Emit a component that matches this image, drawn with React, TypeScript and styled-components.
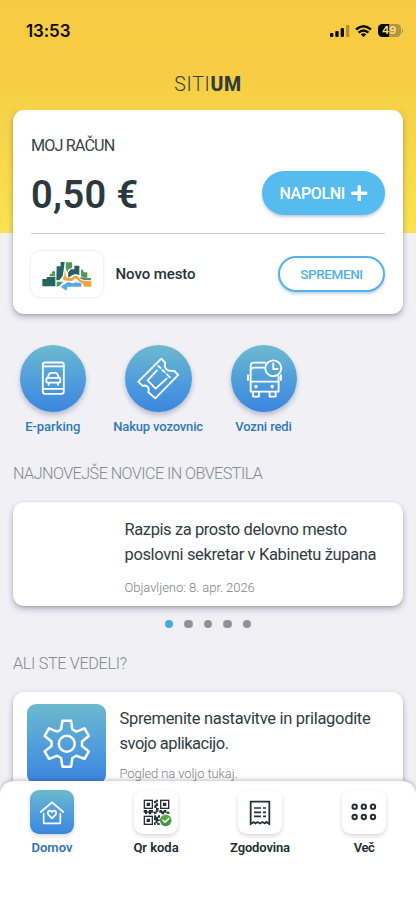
import React from 'react';
import styled, { createGlobalStyle, css } from 'styled-components';

const GlobalStyle = createGlobalStyle`
  * { box-sizing: border-box; }
  body { margin: 0; background: #f0f0f5; font-family: Roboto, "Noto Sans", sans-serif; color: #263338; }
  h1, h2, p { margin: 0; font-weight: inherit; font-size: inherit; }
  button { font-family: inherit; cursor: pointer; }
`;

const blueGradient = css`
  background: linear-gradient(180deg, #6cbacd 0%, #529fdb 50%, #3a86df 100%);
`;

const Screen = styled.div`
  width: 416px;
  height: 900px;
  overflow: hidden;
  display: flex;
  flex-direction: column;
  background: linear-gradient(180deg, #f6cb43 0, #f6cd44 75px, #f8d94a 160px, #fae351 233px) 0 0 / 100% 233px no-repeat #f0f0f5;
`;

const StatusBar = styled.header`
  height: 61px;
  flex: none;
  display: flex;
  align-items: center;
  justify-content: space-between;
  padding: 0 13px 0 26px;
  color: #0b0a04;
`;

const Clock = styled.span`
  font: 600 17px/20px Inter, sans-serif;
  letter-spacing: -0.1px;
`;

const StatusIcons = styled.div`
  display: flex;
  align-items: center;
  gap: 5.5px;
`;

const Battery = styled.span`
  display: flex;
  align-items: center;
  gap: 1px;
  &::after {
    content: '';
    width: 1.5px;
    height: 4px;
    border-radius: 0 2px 2px 0;
    background: #ad9338;
  }
`;

const BatteryLevel = styled.span`
  width: 23px;
  height: 13px;
  border-radius: 4.2px;
  background: linear-gradient(90deg, #080702 49%, #b0963a 49%);
  color: #fbe088;
  font: 600 11px/13.5px Inter, sans-serif;
  text-align: center;
  letter-spacing: -0.2px;
`;

const Brand = styled.h1`
  height: 49px;
  flex: none;
  display: flex;
  justify-content: center;
  padding-top: 12px;
  font-size: 19.5px;
  line-height: 24px;
  font-weight: 300;
  letter-spacing: 0.75px;
  color: #34403b;
  strong { font-weight: 800; letter-spacing: 0.6px; color: #2f3d3b; }
`;

const Content = styled.main`
  flex: none;
  height: 685px;
  overflow: hidden;
  padding: 0 13px;
`;

const Card = styled.section`
  background: #fff;
  border-radius: 11px;
  box-shadow: 0 3px 6px rgba(52, 48, 90, 0.32), 0 1px 2px rgba(52, 48, 90, 0.15);
`;

const AccountCard = styled(Card)`
  height: 203.5px;
  padding: 25.5px 18px 0;
`;

const Label = styled.p`
  font-size: 16.2px;
  line-height: 20px;
  font-weight: 400;
  letter-spacing: -0.88px;
  color: #37434a;
`;

const BalanceRow = styled.div`
  display: flex;
  align-items: center;
  justify-content: space-between;
  margin-top: 15.5px;
  padding-bottom: 18px;
  height: 63px;
  border-bottom: 1px solid #cbced1;
`;

const Amount = styled.span`
  font-size: 38px;
  line-height: 44px;
  padding-top: 4px;
  font-weight: 600;
  letter-spacing: 0.4px;
  color: #2b393f;
`;

const TopUpButton = styled.button`
  width: 123px;
  height: 44px;
  border: 0;
  border-radius: 22px;
  background: #56bbef;
  color: #fff;
  display: flex;
  align-items: center;
  justify-content: center;
  gap: 6px;
  font-size: 16px;
  font-weight: 500;
  letter-spacing: -0.32px;
  box-shadow: 0 2px 3px rgba(60, 110, 150, 0.35);
`;

const CityRow = styled.div`
  display: flex;
  align-items: center;
  margin-top: 17px;
  height: 46px;
`;

const CityBadge = styled.div`
  width: 72px;
  height: 46px;
  border-radius: 9px;
  background: #fff;
  box-shadow: 0 0 3px rgba(0, 0, 0, 0.15);
`;

const CityName = styled.span`
  flex: 1;
  margin-left: 12.5px;
  font-size: 15px;
  font-weight: 550;
  letter-spacing: -0.08px;
`;

const ChangeButton = styled.button`
  width: 107px;
  height: 35.5px;
  border: 2px solid #54b2e6;
  border-radius: 18px;
  background: #fff;
  color: #50b2e5;
  font-size: 13.5px;
  font-weight: 500;
  letter-spacing: -0.4px;
  padding: 0;
  box-shadow: 0 2px 3px rgba(60, 110, 150, 0.3);
`;

const Services = styled.div`
  display: grid;
  grid-template-columns: repeat(3, 105.4px);
  margin: 31.5px 0 0 -12.5px;
`;

const Service = styled.div`
  display: flex;
  flex-direction: column;
  align-items: center;
`;

const ServiceDisc = styled.div`
  width: 66.6px;
  height: 66.6px;
  border-radius: 50%;
  ${blueGradient}
  box-shadow: 0 3px 5px rgba(52, 60, 100, 0.3);
  svg { display: block; }
`;

const ServiceLabel = styled.span<{ $spacing: number }>`
  margin-top: 6.5px;
  margin-left: -1px;
  font-size: 13px;
  line-height: 18px;
  font-weight: 550;
  white-space: nowrap;
  letter-spacing: ${(p) => p.$spacing}px;
  color: #3078b6;
`;

const SectionTitle = styled.h2<{ $top: number; $spacing: number }>`
  margin-top: ${(p) => p.$top}px;
  font-size: 16.2px;
  line-height: 20px;
  font-weight: 300;
  letter-spacing: ${(p) => p.$spacing}px;
  color: #858a8e;
`;

const NewsCard = styled(Card)`
  height: 104px;
  margin-top: 17.9px;
  padding: 14.6px 10px 0 111.5px;
`;

const TipCard = styled(Card)`
  height: 110px;
  margin-top: 18px;
  padding: 12px 10px 0 13.5px;
  display: flex;
  gap: 13.5px;
`;

const TipText = styled.div`
  padding-top: 2px;
`;

const Headline = styled.p<{ $spacing: number }>`
  font-size: 16.5px;
  line-height: 25px;
  font-weight: 400;
  color: #303c41;
  white-space: nowrap;
  letter-spacing: ${(p) => p.$spacing}px;
`;

const Meta = styled.p<{ $top: number; $spacing: number }>`
  margin-top: ${(p) => p.$top}px;
  font-size: 13px;
  line-height: 18px;
  font-weight: 300;
  letter-spacing: ${(p) => p.$spacing}px;
  color: #7c8284;
`;

const Dots = styled.div`
  display: flex;
  justify-content: center;
  gap: 11px;
  margin-top: 13.7px;
`;

const Dot = styled.span<{ $active?: boolean }>`
  width: 8.6px;
  height: 8.6px;
  border-radius: 50%;
  background: ${(p) => (p.$active ? '#48a8e0' : '#8f9397')};
`;

const TipTile = styled.div`
  flex: none;
  width: 79.5px;
  height: 80px;
  border-radius: 9px;
  ${blueGradient}
  svg { display: block; }
`;

const TabBar = styled.nav`
  position: relative;
  flex: none;
  height: 119px;
  margin-top: -14px;
  padding-top: 9.3px;
  border-radius: 14px 14px 0 0;
  background: #fff;
  box-shadow: 0 -1px 5px rgba(30, 30, 50, 0.28);
  display: grid;
  grid-template-columns: repeat(4, 1fr);
`;

const Tab = styled.div`
  display: flex;
  flex-direction: column;
  align-items: center;
`;

const TabTile = styled.div<{ $active?: boolean }>`
  width: 44px;
  height: 44px;
  border-radius: 9px;
  background: #fff;
  ${(p) => p.$active && blueGradient}
  box-shadow: 0 2px 4px rgba(0, 0, 0, 0.16);
  svg { display: block; }
`;

const TabLabel = styled.span<{ $active?: boolean; $spacing: number }>`
  margin-top: 5px;
  font-size: 13px;
  line-height: 18px;
  font-weight: 570;
  letter-spacing: ${(p) => p.$spacing}px;
  color: ${(p) => (p.$active ? '#2f74b5' : '#222b2f')};
`;

const lines = { fill: 'none', strokeLinecap: 'round', strokeLinejoin: 'round' } as const;

const SignalIcon = () => (
  <svg width="20" height="12" viewBox="0 0 60 36" fill="#0b0a04">
    <rect x="0" y="24" width="10" height="12" rx="3" />
    <rect x="16" y="18" width="10" height="18" rx="3" />
    <rect x="32" y="9" width="10" height="27" rx="3" />
    <rect x="48" y="0" width="10" height="36" rx="3" opacity=".3" />
  </svg>
);

const WifiIcon = () => (
  <svg width="17" height="12" viewBox="0 0 51 37" fill="none" stroke="#0b0a04" strokeWidth="7.500">
    <path d="M2.500 14 Q25.500 -6 48.500 14" />
    <path d="M10.500 23.500 Q25.500 10 40.500 23.500" />
    <path d="M17 29 Q25.500 21.500 34 29 L25.500 37 Z" fill="#0b0a04" stroke="none" />
  </svg>
);

const PlusIcon = () => (
  <svg width="16.500" height="16.500" viewBox="0 0 50 50" stroke="#fff" strokeWidth="10" {...lines}>
    <path d="M25 5 V45 M5 25 H45" />
  </svg>
);

const CityLogo = () => (
  <svg width="72" height="46" viewBox="92 61 216 138">
    <g fill="#27635f">
      <path d="M126 145 H139 V139 H165 V167 H126 Z" />
      <path d="M169 107 H181 V94 H193 L190 118 L187 136 L177 149 H168 Z" />
      <path d="M203 126 L211 116 H222 V105 H237 V133 L224 130 L213 135 L204 141 Z" />
      <path d="M241 138 L247 143 H272 V147 H249 L240 143 Z" />
    </g>
    <g fill="#4c9d50">
      <path d="M148 137 V130 L155 129 V122 H164 V137 Z" />
      <path d="M197 95 H215 V112 L205 115 L201 125 L196 112 Z" />
      <path d="M242 117 H249 V125 H261 V141 H247 L242 135 Z" />
      <path d="M169 153 H188 L178 165 L169 168 Z" />
    </g>
    <path d="M194 113 L197 140 L214 143 L221 136 L231 136 L241 147 L247 150 H273 V168 H253 L245 157 L237 154 L229 144 L222 144 L215 152 L190 149 L187 142 L192 137 Z" fill="#f2a33b" />
    <path d="M181 168 L203 154 L217 158 L228 155 L243 158 V168 H201 L198 180 Z" fill="#56a9e4" />
  </svg>
);

const ParkingIcon = () => (
  <svg width="66.600" height="66.600" viewBox="59 46 200 200" stroke="#fff" strokeWidth="5.400" {...lines}>
    <rect x="127.500" y="98.500" width="63" height="94" rx="7" />
    <path d="M128 110 H190 M128 178 H190" />
    <path d="M142 145 L147 133 Q148 130 152 130 H166 Q170 130 171 133 L176 145" />
    <rect x="138" y="145" width="42" height="14" rx="4" />
    <path d="M145 160 V166 M173 160 V166" />
  </svg>
);

const TicketIcon = () => (
  <svg width="66.600" height="66.600" viewBox="375 46 200 200" stroke="#fff" strokeWidth="5.400" {...lines}>
    <path d="M484 87 L496 99 Q492 112 500 119 Q508 126 522 123 L535 136 L466 206 L445 188 Q449 176 441 170 Q435 166 428 169 L415 156 Z" />
    <path d="M471 122 L443 152 L467 177 L500 147" />
    <path d="M475 109 L482 115 M487 121 L495 128 M501 134 L510 143" />
  </svg>
);

const BusIcon = () => (
  <svg width="66.600" height="66.600" viewBox="73 46 200 200" stroke="#fff" strokeWidth="5.600" {...lines}>
    <path d="M176 99 H142 Q132 99 132 109 V186 H216 V140" />
    <path d="M134 120 Q135 114 142 114 H172 M132 156 H216" />
    <circle cx="200" cy="116" r="24" />
    <path d="M200 101 V118 H213" />
    <path d="M139 187 V201 H157 V187 M189 187 V201 H207 V187" />
    <path d="M124 137 V151 M223 137 V151" />
    <circle cx="148" cy="171" r="2.500" fill="#fff" />
    <circle cx="197" cy="171" r="2.500" fill="#fff" />
  </svg>
);

const toothProfile = [[-17, -43], [-13, -69], [13, -69], [17, -43]];
const gearPoints = [0, 60, 120, 180, 240, 300]
  .flatMap((deg) => {
    const a = (deg * Math.PI) / 180;
    return toothProfile.map(
      ([x, y]) => `${(200 + x * Math.cos(a) - y * Math.sin(a)).toFixed(1)},${(191 + x * Math.sin(a) + y * Math.cos(a)).toFixed(1)}`
    );
  })
  .join(' ');

const GearIcon = () => (
  <svg width="79.500" height="80" viewBox="81 72 238 240" stroke="#fff" strokeWidth="7.500" {...lines}>
    <polygon points={gearPoints} />
    <circle cx="200" cy="191" r="24" />
  </svg>
);

const HomeIcon = () => (
  <svg width="44" height="44" viewBox="90 331 132 132" stroke="#fff" strokeWidth="5" {...lines}>
    <path d="M122 397 L156 368 L190 397 M131 402 V431 H181 V402" />
    <path d="M156 416 L145 405 Q141 398 146 394 Q152 391 156 397 Q160 391 166 394 Q171 398 167 405 Z" />
  </svg>
);

const QrIcon = () => (
  <svg width="44" height="44" viewBox="402 331 132 132">
    <defs>
      <linearGradient id="okFill" x1="0" y1="0" x2="0" y2="1">
        <stop offset="0" stopColor="#67b04d" />
        <stop offset="1" stopColor="#3f8a3c" />
      </linearGradient>
    </defs>
    <g fill="none" stroke="#263034" strokeWidth="4">
      <rect x="433" y="362" width="24" height="24" />
      <rect x="482" y="362" width="24" height="24" />
      <rect x="433" y="410" width="24" height="24" />
    </g>
    <g fill="#263034">
      <path d="M440 369h10v10h-10z M489 369h10v10h-10z M440 417h10v10h-10z" />
      <path d="M462 364h5v-4h7v6h-5v5h5v8h-4v6h6v6h-8v-6h-5v-9h4v-6h-5z" />
      <path d="M431 391h10v4h6v-4h12v5h8v-4h8v5h-5v5h-8v-3h-8v5h-8v-5h-5v4h-6v-4h-4z" />
      <path d="M478 391h8v4h5v-4h8v5h9v6h-7v-3h-9v5h-8v-5h-6z" />
      <path d="M462 407h6v4h6v-4h6v7h-6v5h5v6h-6v5h6v6h-7v-5h-5v5h-5v-8h5v-6h-5z" />
    </g>
    <circle cx="497" cy="422" r="17.500" fill="url(#okFill)" />
    <path d="M489 422 L495 428 L506 417" stroke="#fff" strokeWidth="4.500" {...lines} />
  </svg>
);

const ReceiptIcon = () => (
  <svg width="44" height="44" viewBox="96 331 132 132" fill="none" stroke="#263034" strokeWidth="5.400">
    <path d="M134 433 V366 H190 V433 L181 427 L176.500 431 L169 427 L162 431.500 L155 427 L148 431 L143 427 Z" />
    <path d="M144 385 H165 M171 385 H180 M144 398 H165 M171 398 H180 M144 410 H165 M171 410 H180" strokeWidth="5" />
  </svg>
);

const MoreIcon = () => (
  <svg width="44" height="44" viewBox="408 331 132 132" fill="none" stroke="#263034" strokeWidth="6">
    {[381, 412].map((y) => [446, 473.5, 501].map((x) => <circle key={`${x}-${y}`} cx={x} cy={y} r="6.500" />))}
  </svg>
);

const services = [
  { label: 'E-parking', spacing: -0.03, Icon: ParkingIcon },
  { label: 'Nakup vozovnic', spacing: -0.16, Icon: TicketIcon },
  { label: 'Vozni redi', spacing: -0.12, Icon: BusIcon },
];

const tabs = [
  { label: 'Domov', spacing: 0, Icon: HomeIcon, active: true },
  { label: 'Qr koda', spacing: -0.03, Icon: QrIcon },
  { label: 'Zgodovina', spacing: -0.15, Icon: ReceiptIcon },
  { label: 'Več', spacing: -0.4, Icon: MoreIcon },
];

export default function App() {
  return (
    <>
      <GlobalStyle />
      <Screen>
        <StatusBar>
          <Clock>13:53</Clock>
          <StatusIcons>
            <SignalIcon />
            <WifiIcon />
            <Battery>
              <BatteryLevel>49</BatteryLevel>
            </Battery>
          </StatusIcons>
        </StatusBar>
        <Brand>
          SITI<strong>UM</strong>
        </Brand>
        <Content>
          <AccountCard>
            <Label>MOJ RAČUN</Label>
            <BalanceRow>
              <Amount>0,50 €</Amount>
              <TopUpButton>
                NAPOLNI
                <PlusIcon />
              </TopUpButton>
            </BalanceRow>
            <CityRow>
              <CityBadge>
                <CityLogo />
              </CityBadge>
              <CityName>Novo mesto</CityName>
              <ChangeButton>SPREMENI</ChangeButton>
            </CityRow>
          </AccountCard>

          <Services>
            {services.map(({ label, spacing, Icon }) => (
              <Service key={label}>
                <ServiceDisc>
                  <Icon />
                </ServiceDisc>
                <ServiceLabel $spacing={spacing}>{label}</ServiceLabel>
              </Service>
            ))}
          </Services>

          <SectionTitle $top={28} $spacing={-0.56}>NAJNOVEJŠE NOVICE IN OBVESTILA</SectionTitle>
          <NewsCard>
            <Headline $spacing={-0.4}>Razpis za prosto delovno mesto</Headline>
            <Headline $spacing={-0.36}>poslovni sekretar v Kabinetu župana</Headline>
            <Meta $top={12.5} $spacing={-0.05}>Objavljeno: 8. apr. 2026</Meta>
          </NewsCard>
          <Dots>
            <Dot $active />
            <Dot />
            <Dot />
            <Dot />
            <Dot />
          </Dots>

          <SectionTitle $top={25.3} $spacing={-0.32}>ALI STE VEDELI?</SectionTitle>
          <TipCard>
            <TipTile>
              <GearIcon />
            </TipTile>
            <TipText>
              <Headline $spacing={-0.31}>Spremenite nastavitve in prilagodite</Headline>
              <Headline $spacing={-0.48}>svojo aplikacijo.</Headline>
              <Meta $top={9} $spacing={-0.1}>Pogled na voljo tukaj.</Meta>
            </TipText>
          </TipCard>
        </Content>
        <TabBar>
          {tabs.map(({ label, spacing, Icon, active }) => (
            <Tab key={label}>
              <TabTile $active={active}>
                <Icon />
              </TabTile>
              <TabLabel $active={active} $spacing={spacing}>{label}</TabLabel>
            </Tab>
          ))}
        </TabBar>
      </Screen>
    </>
  );
}
